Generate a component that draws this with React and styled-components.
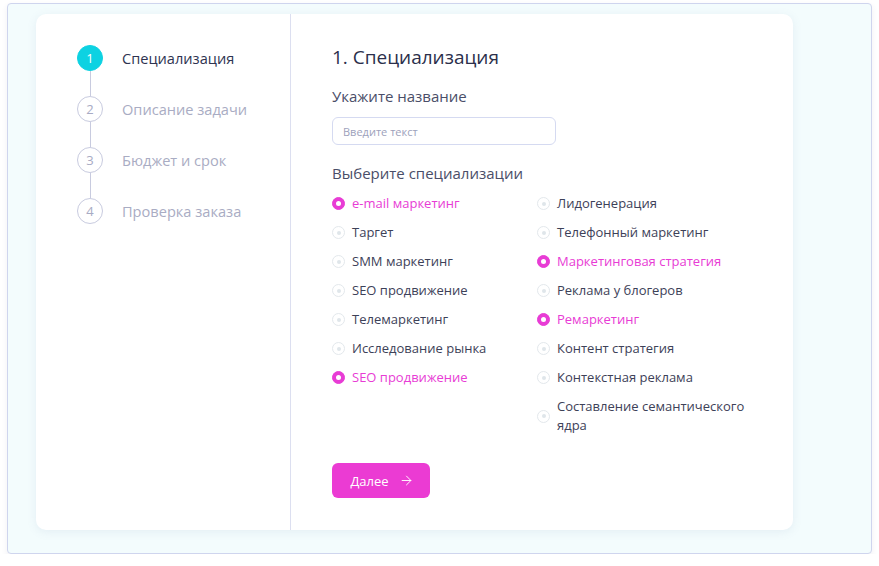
import styled, { createGlobalStyle } from "styled-components";
import { ArrowRight } from "lucide-react";

const GlobalStyle = createGlobalStyle`
  body {
    margin: 0;
    background: #ffffff;
    font-family: "Open Sans", "Liberation Sans", sans-serif;
  }
`
const Frame = styled.div`
  box-sizing: border-box;
  margin: 3px 0 0 7px;
  width: 865px;
  height: 551px;
  padding: 10px 0 0 28px;
  background-color: #f3fcfd;
  border: 1px solid #cfd5ee;
  border-radius: 4px;
  box-shadow: 0 3px 6px rgba(60, 70, 120, 0.08);
`
const Card = styled.div`
  display: flex;
  width: 757px;
  height: 516px;
  background-color: white;
  border-radius: 10px;
  box-shadow: 0 2px 10px rgba(120, 140, 180, 0.12);
`
const Sidebar = styled.div`
  box-sizing: border-box;
  width: 255px;
  padding: 31px 0 0 41px;
  border-right: 1px solid #dcdff0;
  display: flex;
  flex-direction: column;
`
const Step = styled.div`
  display: flex;
  align-items: center;
  gap: 19px;
`
const Circle = styled.div`
  box-sizing: border-box;
  width: 26px;
  height: 26px;
  border-radius: 50%;
  display: flex;
  align-items: center;
  justify-content: center;
  font-size: 13px;
  background-color: ${(p) => (p.$active ? "#0dd2e2" : "white")};
  color: ${(p) => (p.$active ? "white" : "#a8abc4")};
  border: 1px solid ${(p) => (p.$active ? "#0dd2e2" : "#c8cbdf")};
`
const StepLabel = styled.span`
  font-size: 14.6px;
  color: ${(p) => (p.$active ? "#2e3350" : "#a9acc3")};
`
const Connector = styled.div`
  width: 1px;
  height: 25px;
  margin-left: 12.5px;
  background-color: #c8cbdf;
`
const Main = styled.div`
  flex: 1;
  padding: 29px 0 0 41px;
  display: flex;
  flex-direction: column;
  align-items: flex-start;
`
const Title = styled.h2`
  margin: 0;
  font-size: 19px;
  line-height: 28px;
  font-weight: 400;
  color: #2b2f4b;
`
const Label = styled.div`
  font-size: 15px;
  line-height: 20px;
  color: #4a4e68;
  margin-top: ${(p) => p.$top}px;
`
const Input = styled.input`
  box-sizing: border-box;
  margin-top: 11px;
  width: 224px;
  height: 28px;
  padding: 0 10px;
  border: 1px solid #d5daf1;
  border-radius: 6px;
  font-family: inherit;
  font-size: 11px;
  color: #2e3350;
  outline: none;
  &::placeholder {
    color: #9da1bb;
  }
`
const Options = styled.div`
  margin-top: 11px;
  display: grid;
  grid-template-columns: 205px 218px;
  grid-template-rows: repeat(8, auto);
  row-gap: 10px;
`
const Option = styled.label`
  display: flex;
  align-items: center;
  gap: 7px;
  font-size: 13px;
  line-height: 19px;
  color: ${(p) => (p.$checked ? "#e83cd5" : "#3d4158")};
  grid-row: ${(p) => p.$row};
  grid-column: ${(p) => p.$col};
`
const Radio = styled.span`
  box-sizing: border-box;
  flex: none;
  width: 13px;
  height: 13px;
  border-radius: 50%;
  display: flex;
  align-items: center;
  justify-content: center;
  background-color: ${(p) => (p.$checked ? "#e83cd5" : "white")};
  border: 1px solid ${(p) => (p.$checked ? "#e83cd5" : "#e3e8ec")};
  &::after {
    content: "";
    width: ${(p) => (p.$checked ? 5 : 4)}px;
    height: ${(p) => (p.$checked ? 5 : 4)}px;
    border-radius: 50%;
    background-color: ${(p) => (p.$checked ? "white" : "#dfe6ea")};
  }
`
const Button = styled.button`
  margin-top: 28px;
  width: 98px;
  height: 35px;
  border: none;
  border-radius: 6px;
  background-color: #eb3bd3;
  color: white;
  font-family: inherit;
  font-size: 13px;
  display: flex;
  align-items: center;
  justify-content: center;
  gap: 10px;
  padding: 0 0 0 2px;
  cursor: pointer;
`

const steps = ["Специализация", "Описание задачи", "Бюджет и срок", "Проверка заказа"];

const left = [
  { text: "e-mail маркетинг", checked: true },
  { text: "Таргет" },
  { text: "SMM маркетинг" },
  { text: "SEO продвижение" },
  { text: "Телемаркетинг" },
  { text: "Исследование рынка" },
  { text: "SEO продвижение", checked: true },
];
const right = [
  { text: "Лидогенерация" },
  { text: "Телефонный маркетинг" },
  { text: "Маркетинговая стратегия", checked: true },
  { text: "Реклама у блогеров" },
  { text: "Ремаркетинг", checked: true },
  { text: "Контент стратегия" },
  { text: "Контекстная реклама" },
  { text: "Составление семантического ядра" },
];

export default function App() {
  return (
    <>
      <GlobalStyle />
      <Frame>
        <Card>
          <Sidebar>
            {steps.map((s, i) => (
              <div key={s}>
                {i > 0 && <Connector />}
                <Step>
                  <Circle $active={i === 0}>{i + 1}</Circle>
                  <StepLabel $active={i === 0}>{s}</StepLabel>
                </Step>
              </div>
            ))}
          </Sidebar>
          <Main>
            <Title>1. Специализация</Title>
            <Label $top={15}>Укажите название</Label>
            <Input placeholder="Введите текст" />
            <Label $top={18}>Выберите специализации</Label>
            <Options>
              {left.map((o, i) => (
                <Option key={"l" + i} $checked={o.checked} $row={i + 1} $col={1}>
                  <Radio $checked={o.checked} />
                  {o.text}
                </Option>
              ))}
              {right.map((o, i) => (
                <Option key={"r" + i} $checked={o.checked} $row={i + 1} $col={2}>
                  <Radio $checked={o.checked} />
                  <span>{o.text}</span>
                </Option>
              ))}
            </Options>
            <Button>
              Далее
              <ArrowRight size={15} strokeWidth={1.5} />
            </Button>
          </Main>
        </Card>
      </Frame>
    </>
  );
}
